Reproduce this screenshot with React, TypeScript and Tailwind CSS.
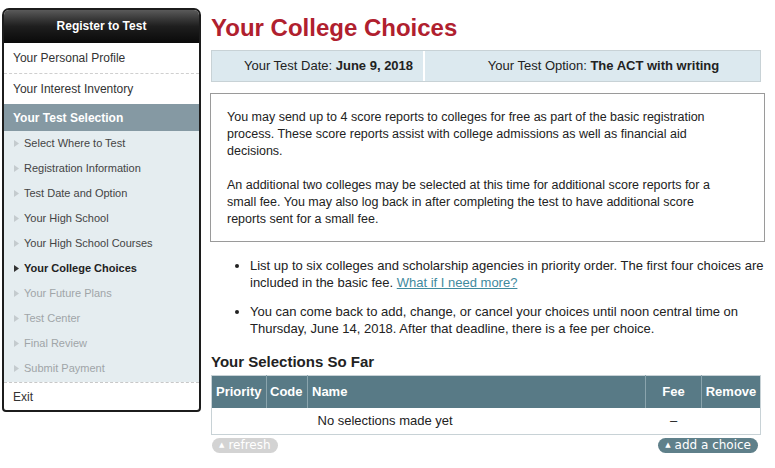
const subItems = [
  { label: 'Select Where to Test', state: 'done' },
  { label: 'Registration Information', state: 'done' },
  { label: 'Test Date and Option', state: 'done' },
  { label: 'Your High School', state: 'done' },
  { label: 'Your High School Courses', state: 'done' },
  { label: 'Your College Choices', state: 'current' },
  { label: 'Your Future Plans', state: 'todo' },
  { label: 'Test Center', state: 'todo' },
  { label: 'Final Review', state: 'todo' },
  { label: 'Submit Payment', state: 'todo' },
]

function Arrow({ dark }: { dark?: boolean }) {
  return (
    <svg width="5" height="7" viewBox="0 0 5 7" className="mr-[5px] shrink-0">
      <path d="M0 0 L5 3.5 L0 7 Z" fill={dark ? '#333333' : '#c4cbce'} />
    </svg>
  )
}

function Sidebar() {
  return (
    <div className="w-[199px] mt-[8px] ml-[2px] shrink-0 self-start rounded-t-[7px] rounded-b-[4px] border-2 border-[#1c1c1c] bg-white overflow-hidden">
      <div className="h-[33px] pb-[2px] flex items-center justify-center bg-gradient-to-b from-[#5a5a5a] via-[#1e1e1e] to-[#0a0a0a] text-white font-bold text-[12px]">
        Register to Test
      </div>
      <div className="h-[31px] flex items-center pl-[9px] text-[12px] text-[#333] border-b border-dashed border-[#cfcfcf]">
        Your Personal Profile
      </div>
      <div className="h-[30px] flex items-center pl-[9px] text-[12px] text-[#333]">
        Your Interest Inventory
      </div>
      <div className="h-[27px] flex items-center pl-[9px] text-[12px] font-bold text-white bg-[#8599a3]">
        Your Test Selection
      </div>
      <div className="bg-[#e5edf0] pb-[1px]">
        {subItems.map((it) => (
          <div
            key={it.label}
            className={`h-[25px] flex items-center pl-[10px] text-[11px] ${
              it.state === 'current'
                ? 'font-bold text-[#222]'
                : it.state === 'done'
                  ? 'text-[#444]'
                  : 'text-[#a0a5a8]'
            }`}
          >
            <Arrow dark={it.state === 'current'} />
            {it.label}
          </div>
        ))}
      </div>
      <div className="h-[28px] flex items-center pl-[9px] text-[12px] text-[#333] border-t border-dashed border-[#c8c8c8]">
        Exit
      </div>
    </div>
  )
}

export default function App() {
  return (
    <div className="w-[775px] h-[468px] overflow-hidden bg-white flex font-['Liberation_Sans',Arial,sans-serif] text-[#222]">
      <Sidebar />
      <div className="ml-[10px] w-[556px] flex flex-col">
        <h1 className="mt-[12px] text-[24px] leading-[32px] font-bold text-[#b0202e]">Your College Choices</h1>

        <div className="mt-[6px] w-[550px] h-[32px] flex border border-[#c8d2d6] bg-[#dce9ef] text-[13px] text-[#222]">
          <div className="w-[213px] pl-[22px] flex items-center justify-center border-r-2 border-white">
            Your Test Date:&nbsp;<span className="font-bold">June 9, 2018</span>
          </div>
          <div className="flex-1 pl-[22px] flex items-center justify-center">
            Your Test Option:&nbsp;<span className="font-bold">The ACT with writing</span>
          </div>
        </div>

        <div className="mt-[11px] ml-[-1px] w-[555px] border border-[#9a9a9a] pt-[15px] pb-[13px] pl-[16px] text-[12.5px] leading-[17px] text-[#222]">
          <p className="w-[488px]">
            You may send up to 4 score reports to colleges for free as part of the basic registration
            process. These score reports assist with college admissions as well as financial aid
            decisions.
          </p>
          <p className="mt-[17px] w-[488px]">
            An additional two colleges may be selected at this time for additional score reports for a
            small fee. You may also log back in after completing the test to have additional score
            reports sent for a small fee.
          </p>
        </div>

        <ul className="mt-[15px] pl-[39px] w-[560px] text-[13px] leading-[17px] text-[#222] list-disc">
          <li>
            List up to six colleges and scholarship agencies in priority order. The first four choices are
            included in the basic fee.{' '}
            <a href="#" className="text-[#3f8a9e] underline">What if I need more?</a>
          </li>
          <li className="mt-[12px]">
            You can come back to add, change, or cancel your choices until noon central time on
            Thursday, June 14, 2018. After that deadline, there is a fee per choice.
          </li>
        </ul>

        <h2 className="mt-[15px] text-[15px] leading-[20px] font-bold text-[#222]">Your Selections So Far</h2>

        <table className="mt-[3px] w-[550px] table-fixed border border-[#c8d2d6] border-collapse text-[13px]">
          <thead>
            <tr className="h-[32px] bg-[#587a86] text-white font-bold">
              <th className="w-[55px] pl-[4px] text-left border-r border-[#8aa4ad]">Priority</th>
              <th className="w-[41px] pl-[3px] text-left border-r border-[#8aa4ad]">Code</th>
              <th className="pl-[4px] text-left border-r border-[#8aa4ad]">Name</th>
              <th className="w-[56px] text-center border-r border-[#8aa4ad]">Fee</th>
              <th className="w-[59px] text-center">Remove</th>
            </tr>
          </thead>
          <tbody>
            <tr className="h-[27px] text-[#222]">
              <td></td>
              <td></td>
              <td className="pl-[10px]">No selections made yet</td>
              <td className="text-center">–</td>
              <td></td>
            </tr>
          </tbody>
        </table>

        <div className="mt-[3px] w-[550px] flex justify-between items-start">
          <span className="ml-[1px] h-[15px] px-[7px] rounded-full bg-[#d3d3d3] text-white text-[12px] leading-[15px] font-['DejaVu_Sans',sans-serif] flex items-center">
            <span className="text-[7px] mr-[4px]">▲</span>refresh
          </span>
          <span className="mr-[3px] h-[15px] px-[7px] rounded-full bg-[#5f808a] text-white text-[12px] leading-[15px] font-['DejaVu_Sans',sans-serif] flex items-center">
            <span className="text-[7px] mr-[4px]">▲</span>add a choice
          </span>
        </div>
      </div>
    </div>
  )
}
